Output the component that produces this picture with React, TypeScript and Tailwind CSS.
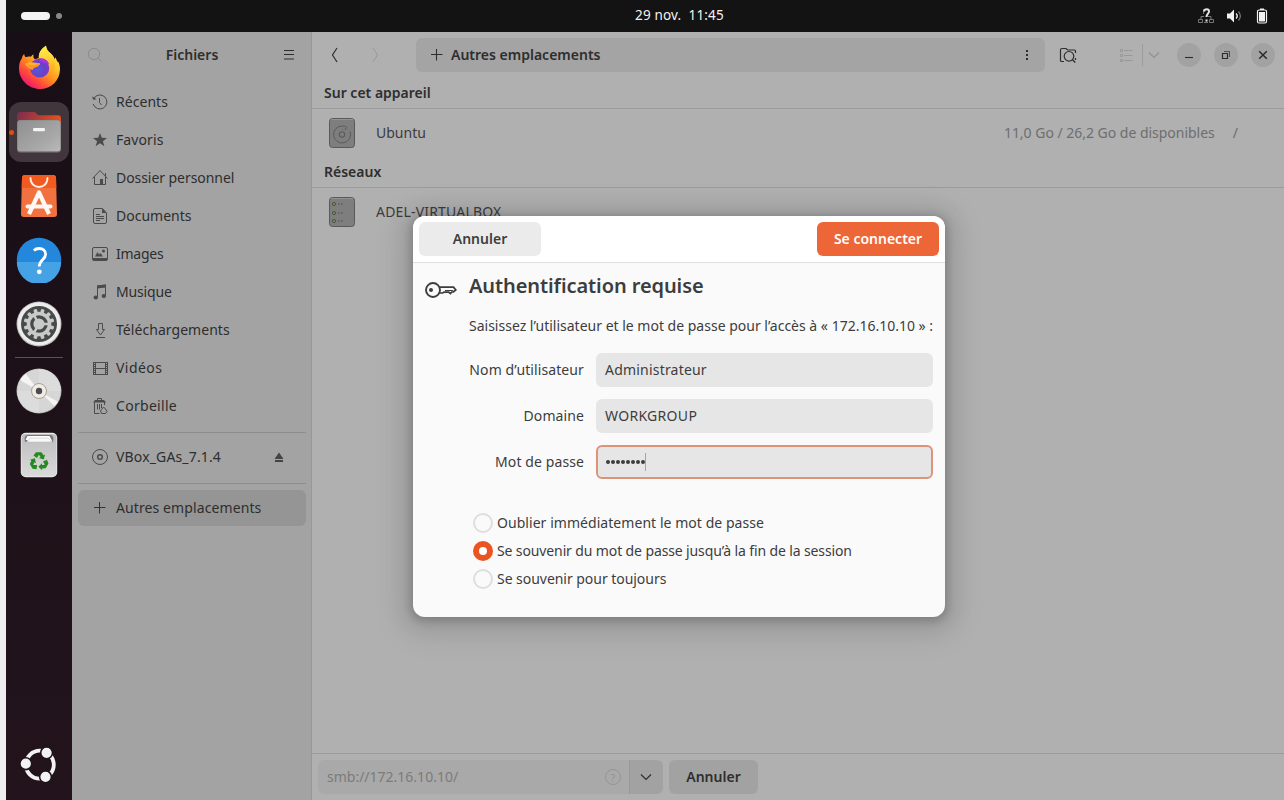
import type { ReactNode } from "react";

function Glyph({ children, size = 16, className = "" }: { children: ReactNode; size?: number; className?: string }) {
  return (
    <svg
      width={size}
      height={size}
      viewBox={`0 0 ${size} ${size}`}
      fill="none"
      stroke="currentColor"
      strokeWidth="1"
      className={`shrink-0 ${className}`}
    >
      {children}
    </svg>
  );
}

/* ---------- Dock icons ---------- */

function FirefoxIcon() {
  return (
    <svg width="44" height="46" viewBox="0 0 44 46">
      <defs>
        <linearGradient id="ffBody" x1="0.85" y1="0.1" x2="0.2" y2="0.95">
          <stop offset="0" stopColor="#fff14a" />
          <stop offset="0.3" stopColor="#ffc02a" />
          <stop offset="0.55" stopColor="#ff8a1f" />
          <stop offset="0.78" stopColor="#ff4440" />
          <stop offset="1" stopColor="#ee1273" />
        </linearGradient>
        <linearGradient id="ffTail" x1="0.5" y1="0" x2="0.6" y2="1">
          <stop offset="0" stopColor="#fff04d" />
          <stop offset="0.55" stopColor="#ffc92c" />
          <stop offset="1" stopColor="#ff8a1c" stopOpacity="0.2" />
        </linearGradient>
        <radialGradient id="ffGlobe" cx="0.4" cy="0.6" r="0.65">
          <stop offset="0" stopColor="#5a55d8" />
          <stop offset="0.6" stopColor="#6642c6" />
          <stop offset="1" stopColor="#9033d4" />
        </radialGradient>
      </defs>
      <path
        d="M1 23.5c0-5.300 1.400-8 3-10.500.2-1.200.8-2.500 2.200-4 .2 1.500.7 2.500 1.400 3.200 1.700-.9 4-1 5.400-.5.6-1.200 1.500-1.900 2.600-2.200-.6 1.800-.2 3.500 1.200 4.800l4-1.200c-.5-5 2.300-9.500 7.200-12.400.2 3.300 2 5.300 4.500 7.600 2.200 1.900 3.700 4 4.300 6.500l.3-2.600c1.300 1.700 2 3.500 2.100 5.400l.6-1.500c1.600 2.700 2.300 5.600 2.200 8.300C41.700 35.600 33.200 44 22 44S1 35 1 23.500Z"
        fill="url(#ffBody)"
      />
      <path d="M21 13.500C20.300 8.200 23 3.800 28 .7c.2 3.300 2 5.300 4.500 7.600 4.500 4 5.500 9.300 4.500 14-.8 4-3 7-6 8.500 2.300-5 1.800-10.500-2.200-14-2.400-2-4.900-2.600-7.800-3.300Z" fill="url(#ffTail)" />
      <circle cx="21.700" cy="23" r="9.600" fill="url(#ffGlobe)" />
      <path d="M21 13.500c4-.7 8.600 1.200 10.300 5.800-1.800-1.200-3.600-1.600-5.300-1.200l-4-2Z" fill="#a436dc" />
      <path d="M7 18.800c3.500-2 7.500-1.900 10.500-1 2 .6 3.500.4 4.700.7-.5 1.700-2 2.800-4.200 3.500-2.200.8-3.500 1.400-3.500 3.200-2.600-1.400-5.500-3.400-7.500-6.400Z" fill="#ffb12e" />
      <path d="M14.500 25c.5-1.700 1.600-2.300 3.500-3 2.100-.7 3.600-1.700 4.200-3.500l-2-.3c-1.500 1.700-3.500 2-5.500 2-2 0-4-.6-5.700-1.300 1.400 2.700 3.300 4.700 5.500 6.100Z" fill="#ff9126" />
    </svg>
  );
}

function FilesIcon() {
  return (
    <svg width="48" height="48" viewBox="0 0 48 48">
      <defs>
        <linearGradient id="folderBack" x1="0" y1="0" x2="1" y2="0.2">
          <stop offset="0" stopColor="#7a2b52" />
          <stop offset="1" stopColor="#e2501d" />
        </linearGradient>
        <linearGradient id="folderFront" x1="0" y1="0" x2="1" y2="1">
          <stop offset="0" stopColor="#8f8f8f" />
          <stop offset="0.7" stopColor="#a9a9a9" />
          <stop offset="1" stopColor="#bababa" />
        </linearGradient>
      </defs>
      <path d="M2 7a3 3 0 0 1 3-3h14c2 0 3 3.200 5 3.200h19a3 3 0 0 1 3 3V20H2Z" fill="url(#folderBack)" />
      <rect x="2" y="12" width="44" height="32.500" rx="3.500" fill="#777" />
      <rect x="2.500" y="12.300" width="43" height="31" rx="3" fill="url(#folderFront)" />
      <rect x="18" y="20" width="12" height="3.200" rx="1.300" fill="#f4f4f4" />
    </svg>
  );
}

function SoftwareIcon() {
  return (
    <svg width="38" height="44" viewBox="0 0 38 44">
      <path d="M5 1h28a3 3 0 0 1 3 2.800l1 36a3 3 0 0 1-3 3.200H4a3 3 0 0 1-3-3.200l1-36A3 3 0 0 1 5 1Z" fill="#f1713f" />
      <path d="M5 1h28a3 3 0 0 1 3 2.800L36.300 14H1.700L2 3.800A3 3 0 0 1 5 1Z" fill="#f25a1f" />
      <path d="M10.500 4c0 12 17 12 17 0" fill="none" stroke="#fff0e8" strokeWidth="1.800" strokeLinecap="round" />
      <path d="m9 40 10-21.500L29 40" fill="none" stroke="#fff7f3" strokeWidth="4.200" strokeLinejoin="round" />
      <path d="M7.500 32.500h23" stroke="#fff7f3" strokeWidth="4" strokeLinecap="round" />
    </svg>
  );
}

function HelpIcon() {
  return (
    <svg width="46" height="46" viewBox="0 0 46 46">
      <circle cx="23" cy="23" r="22.200" fill="#2388dc" />
      <path d="M.8 25h44.400a22.200 22.200 0 0 1-44.400 0Z" fill="#45a3e5" />
      <path d="M17.800 13.500c1.500-1.400 3.200-2 5.300-2 4 0 6.500 2.300 6.500 5.700 0 5.600-6.300 5.700-6.300 12.300" fill="none" stroke="#fff" strokeWidth="2.800" />
      <circle cx="23.300" cy="34.800" r="2.400" fill="#fff" />
    </svg>
  );
}

const teeth = [0, 30, 60, 90, 120, 150, 180, 210, 240, 270, 300, 330];

function SettingsIcon() {
  return (
    <svg width="46" height="46" viewBox="0 0 46 46">
      <circle cx="23" cy="23" r="22.500" fill="#b9b9b9" />
      <circle cx="23" cy="22.800" r="21.500" fill="#ececec" />
      <circle cx="23" cy="23" r="18" fill="#484a4a" />
      {teeth.map((a) => (
        <rect key={a} x="21.200" y="7.700" width="3.600" height="5" rx="1" fill="#c9c9c9" transform={`rotate(${a + 15} 23 23)`} />
      ))}
      <circle cx="23" cy="23" r="12.300" fill="#c9c9c9" />
      <circle cx="23" cy="23" r="7.200" fill="none" stroke="#484a4a" strokeWidth="3.200" />
      <path d="M23 23h10M23 23l-5-8.700M23 23l-5 8.700" stroke="#c9c9c9" strokeWidth="2.500" />
      <circle cx="23" cy="23" r="4.700" fill="#c9c9c9" />
    </svg>
  );
}

function DiscIcon() {
  return (
    <svg width="46" height="46" viewBox="0 0 46 46">
      <circle cx="23" cy="23" r="22.500" fill="#aaa" />
      <circle cx="23" cy="22.900" r="21.800" fill="#d6d6d6" />
      <path d="M23 23 23 1.100A21.800 21.800 0 0 1 44.800 23ZM23 23v21.800A21.800 21.800 0 0 1 1.200 23Z" fill="#dcdcdc" />
      <path d="M23 23 4.200 12.200a21.800 21.800 0 0 1 5.500-6.500ZM23 23l18.800 10.800a21.800 21.800 0 0 1-3.300 4.300Z" fill="#f6f4f2" />
      <circle cx="23" cy="23" r="7.500" fill="#eeece8" stroke="#aaa190" strokeWidth="1" />
      <circle cx="23" cy="23" r="3.200" fill="#4b4b4b" />
    </svg>
  );
}

function TrashIcon() {
  return (
    <svg width="38" height="46" viewBox="0 0 38 46">
      <defs>
        <linearGradient id="bin" x1="0" y1="0" x2="0" y2="1">
          <stop offset="0" stopColor="#bdbdbd" />
          <stop offset="1" stopColor="#dadada" />
        </linearGradient>
      </defs>
      <rect x=".8" y=".8" width="36.400" height="44.400" rx="5" fill="#ececec" />
      <rect x="1.500" y="2" width="35" height="42.200" rx="4" fill="url(#bin)" />
      <path d="M5 10c-1-4 0-7 3-7h22c3 0 4 3 3 7H30L28 6.500 9 9Z" fill="#777" />
      <path d="M7.500 4h22l3 5.500-4-.6-3-3-17 3-3-1.500Z" fill="#fff" />
      <path d="M7 10 10 6h18l4 4Z" fill="#f8f8f8" stroke="#bbb" strokeWidth=".5" />
      {[0, 120, 240].map((a) => (
        <g key={a} transform={`rotate(${a} 19 29.500)`}>
          <path d="M13.500 23.500 16 20.300h5.500l2 3 1.500-.8-1.200 5-4.800-1.500 1.600-.9-1.700-2.300-2 3.300Z" fill="#268b1f" />
        </g>
      ))}
    </svg>
  );
}

function LauncherIcon() {
  return (
    <svg width="40" height="40" viewBox="0 0 40 40">
      <circle cx="20.800" cy="19.700" r="14" fill="none" stroke="#f2f2f2" strokeWidth="3.800" />
      <g fill="#f2f2f2" stroke="#20131a" strokeWidth="1.600">
        <circle cx="6.800" cy="18.700" r="5.900" />
        <circle cx="27.600" cy="7.800" r="5.900" />
        <circle cx="26.500" cy="31.800" r="5.900" />
      </g>
    </svg>
  );
}

function Dock() {
  return (
    <nav className="flex w-[66px] shrink-0 flex-col items-center bg-linear-to-b from-[#180e15] to-[#23141c] pt-1">
      <div className="flex h-16 items-center justify-center pl-0.5"><FirefoxIcon /></div>
      <div className="flex h-16 w-full items-center justify-center">
        <div className="relative flex size-[60px] items-center justify-center rounded-xl bg-[#42363d]">
          <span className="absolute top-[27.500px] left-0 size-[5px] rounded-full bg-[#df4b19]" />
          <FilesIcon />
        </div>
      </div>
      <div className="flex h-16 items-center justify-center"><SoftwareIcon /></div>
      <div className="flex h-16 items-center justify-center pb-px"><HelpIcon /></div>
      <div className="flex h-16 items-center justify-center"><SettingsIcon /></div>
      <div className="my-px h-px w-12 bg-[#5a5257]" />
      <div className="flex h-16 items-center justify-center"><DiscIcon /></div>
      <div className="flex h-16 items-center justify-center"><TrashIcon /></div>
      <div className="mt-auto mb-[15px] flex size-10 items-center justify-center"><LauncherIcon /></div>
    </nav>
  );
}

/* ---------- Sidebar ---------- */

const places: { label: string; tracking: string; icon: ReactNode }[] = [
  {
    label: "Récents",
    tracking: "tracking-[0.05px]",
    icon: (
      <Glyph>
        <path d="M1.800 4.500A7 7 0 1 1 1.200 10" />
        <path d="M.3 2.300 1 5.800l3.500-.6Z" fill="currentColor" stroke="none" />
        <path d="M7.500 4v4.500l2 2.500" />
      </Glyph>
    ),
  },
  {
    label: "Favoris",
    tracking: "tracking-[0.1px]",
    icon: (
      <Glyph>
        <path d="m8 1 1.800 4.800 5.200.2-4.100 3.200 1.500 5L8 11.300l-4.400 2.900 1.500-5L1 6l5.200-.2Z" fill="currentColor" stroke="none" />
      </Glyph>
    ),
  },
  {
    label: "Dossier personnel",
    tracking: "tracking-[-0.06px]",
    icon: (
      <Glyph>
        <path d="m.5 8.500 7.500-8 7.500 8M2.500 7v7.500h11V7M13.500 3v3" />
        <path d="M8 9h3v5.500H8Z" fill="currentColor" stroke="none" />
      </Glyph>
    ),
  },
  {
    label: "Documents",
    tracking: "",
    icon: (
      <Glyph>
        <path d="M10.500.5H3a1.500 1.500 0 0 0-1.500 1.500v12A1.500 1.500 0 0 0 3 15.500h10a1.500 1.500 0 0 0 1.500-1.500V5ZM4 6.500h4M4 8.500h8M4 10.500h8M4 12.500h4" />
        <path d="M10 .5 14.500 5H10Z" fill="currentColor" stroke="none" />
      </Glyph>
    ),
  },
  {
    label: "Images",
    tracking: "tracking-[-0.25px]",
    icon: (
      <Glyph>
        <rect x=".5" y="1.500" width="15" height="13" rx="1.500" />
        <path d="M1 12h14v2.500H1ZM3 10.500l2.500-4.500 1.500 2.500L8.500 7l2.500 3.500Z" fill="currentColor" stroke="none" />
        <circle cx="11.500" cy="5" r="1.500" fill="currentColor" stroke="none" />
      </Glyph>
    ),
  },
  {
    label: "Musique",
    tracking: "tracking-[-0.15px]",
    icon: (
      <Glyph>
        <path d="M5.500 13V2l8-1v10.500" />
        <path d="M5 1.500 14 .500V3.500L5 4.500Z" fill="currentColor" stroke="none" />
        <ellipse cx="3.800" cy="13.500" rx="2.200" ry="1.900" fill="currentColor" stroke="none" />
        <ellipse cx="11.800" cy="12" rx="2.200" ry="1.900" fill="currentColor" stroke="none" />
      </Glyph>
    ),
  },
  {
    label: "Téléchargements",
    tracking: "tracking-[0.05px]",
    icon: (
      <Glyph>
        <path d="M6.500 1.500h4v6h2L8.500 13l-4-5.500h2ZM4 15.500h9" />
      </Glyph>
    ),
  },
  {
    label: "Vidéos",
    tracking: "tracking-[0.45px]",
    icon: (
      <Glyph>
        <path d="M1.500 2v13M15.500 2v13M3.500 2v13M13.500 2v13M1 2.500h14.500M3.500 8.500h10M1 14.500h14.500M1 4.500h2M1 6.500h2M1 8.500h2M1 10.500h2M1 12.500h2M14 4.500h2M14 6.500h2M14 8.500h2M14 10.500h2M14 12.500h2" />
      </Glyph>
    ),
  },
  {
    label: "Corbeille",
    tracking: "tracking-[0.3px]",
    icon: (
      <Glyph>
        <path d="M5.500 2.500V.500h4v2M2.500 4.500v11h5M12.500 4v3M5.500 6v5.500M7.500 6v5.500M9.500 6v4" />
        <path d="M1 4.500 3 2h9l2 2.500Z" fill="currentColor" stroke="none" />
        <path d="m9.500 11.500 2-2.500 2 2 1.500 2.500-1.500 2h-4L8.500 13Z" />
      </Glyph>
    ),
  },
];

function Sidebar() {
  return (
    <aside className="flex w-60 shrink-0 flex-col border-r border-[#989898] bg-[#a3a3a3] text-[#2e2e2e]">
      <header className="flex h-[46px] items-center justify-between pr-3.5 pl-[15px]">
        <Glyph className="text-[#8b8b8b]">
          <circle cx="7" cy="7" r="5.700" />
          <path d="m11 11 3.500 3.500" />
        </Glyph>
        <h1 className="pb-0.5 text-[14px] font-semibold">Fichiers</h1>
        <Glyph>
          <path d="M3 3.500h10M3 7.500h10M3 12h10" strokeWidth="1.200" />
        </Glyph>
      </header>
      <ul className="flex flex-col gap-0.5 pt-1.5 pr-[5px] pl-1.5">
        {places.map((p) => (
          <li key={p.label} className="flex h-9 items-center gap-2 px-3.5 text-[14px]">
            <span className="text-[#4b4b4b]">{p.icon}</span>
            <span className={`pb-0.5 ${p.tracking}`}>{p.label}</span>
          </li>
        ))}
      </ul>
      <div className="mt-2 mr-[5px] ml-1.5 h-px bg-[#8d8d8d]" />
      <div className="mt-1.5 mr-[5px] ml-1.5 flex h-9 items-center gap-2 px-3.5 text-[14px]">
        <Glyph className="text-[#4b4b4b]">
          <circle cx="8" cy="8" r="7.500" />
          <circle cx="8" cy="8" r="2.300" strokeWidth="1.500" />
        </Glyph>
        <span className="flex-1 pb-0.5 tracking-[0.15px]">VBox_GAs_7.1.4</span>
        <Glyph className="mr-[5px] text-[#444]">
          <path d="m8 3.500 4.500 6.500h-9ZM4 11h8v2H4Z" fill="currentColor" stroke="none" />
        </Glyph>
      </div>
      <div className="mt-2 mr-[5px] ml-1.5 h-px bg-[#8d8d8d]" />
      <div className="mt-1.5 mr-[5px] ml-1.5 flex h-9 items-center gap-2 rounded-md bg-[#959595] px-3.5 text-[14px]">
        <Glyph className="text-[#333]">
          <path d="M2 7.500h11.500M7.500 2v11.500" />
        </Glyph>
        <span className="pb-0.5 tracking-[0.1px]">Autres emplacements</span>
      </div>
    </aside>
  );
}

/* ---------- Main pane ---------- */

function WindowButton({ children }: { children: ReactNode }) {
  return <span className="flex size-6 items-center justify-center rounded-full bg-[#a2a2a2] text-[#2b2b2b]">{children}</span>;
}

function Toolbar() {
  return (
    <header className="flex h-[46px] shrink-0 items-center pr-[9px] pl-[14px]">
      <Glyph>
        <path d="M11 1 6.500 8l4.500 7" strokeWidth="1.200" />
      </Glyph>
      <Glyph className="ml-6 text-[#989898]">
        <path d="M7 1l4.500 7L7 15" />
      </Glyph>
      <div className="ml-[34px] flex h-[34px] w-[629px] items-center rounded-md bg-[#a4a4a4] pr-2.5 pl-[13px]">
        <Glyph>
          <path d="M2 7.500h11.500M7.500 2v11.500" strokeWidth="1.100" />
        </Glyph>
        <span className="ml-1.5 flex-1 pb-0.5 text-[14px] font-semibold">Autres emplacements</span>
        <Glyph>
          <path d="M7 3h2v2H7ZM7 7h2v2H7ZM7 11h2v2H7Z" fill="currentColor" stroke="none" />
        </Glyph>
      </div>
      <Glyph size={18} className="ml-[14px]">
        <path d="M5 15.500H2.500A1 1 0 0 1 1.500 14.500V4A1.500 1.500 0 0 1 3 2.500h4L8.500 4h7a1 1 0 0 1 1 1v2M16.500 12v2" strokeWidth="1.200" />
        <circle cx="10" cy="10.300" r="4.800" strokeWidth="1.200" />
        <path d="m13.300 13.500 3 3" strokeWidth="1.300" />
      </Glyph>
      <Glyph className="ml-[43px] text-[#989898]">
        <path d="M.5 2.500h2v2h-2ZM.500 7.500h2v2h-2ZM.500 12.500h2v2h-2ZM4 3.500h8.500M4 8.500h8.500M4 13.500h8.500" />
      </Glyph>
      <div className="ml-1.5 h-[22px] w-px bg-[#9d9d9d]" />
      <Glyph className="ml-[3px] text-[#929292]">
        <path d="m3 5.500 5 5 5-5" strokeWidth="1.200" />
      </Glyph>
      <div className="ml-auto flex gap-[13px]">
        <WindowButton>
          <Glyph><path d="M4 10.500h8" strokeWidth="1.100" /></Glyph>
        </WindowButton>
        <WindowButton>
          <Glyph>
            <path d="M4.500 6.500h5v5h-5Z" strokeWidth="1.200" />
            <path d="M6 4.500h5.500V10" strokeWidth="1" opacity="0.700" />
          </Glyph>
        </WindowButton>
        <WindowButton>
          <Glyph><path d="m4.200 4.200 7.600 7.600M11.800 4.200l-7.600 7.600" strokeWidth="1.500" /></Glyph>
        </WindowButton>
      </div>
    </header>
  );
}

function DriveIcon() {
  return (
    <svg width="28" height="32" viewBox="0 0 28 32" className="shrink-0">
      <rect x="1.500" y="1.500" width="25" height="29" rx="3" fill="#7e7e7e" stroke="#595959" />
      <path d="M3 2.500h22" stroke="#929292" />
      <path d="M22 14.500a8.500 8.500 0 1 1-7.500-5.500c2.500 0 4 .8 4.500 1.500-.5 1-1.500 1.800-2.500 2M14 12.500h.5" fill="none" stroke="#5c5c5c" strokeWidth="1" />
      <circle cx="14" cy="17.500" r="2.700" fill="none" stroke="#5c5c5c" strokeWidth="1.100" />
    </svg>
  );
}

function ServerIcon() {
  return (
    <svg width="28" height="32" viewBox="0 0 28 32" className="shrink-0">
      <rect x="1.500" y="1.500" width="25" height="29" rx="3" fill="#7e7e7e" stroke="#595959" />
      <path d="M3 2.500h22" stroke="#929292" />
      {[8, 17, 25].map((y) => (
        <g key={y}>
          <circle cx="6" cy={y} r="1.600" fill="#6e9440" stroke="#525252" />
          <path d={`M10 ${y}h1.500M13 ${y}h1.500`} stroke="#4b4b4b" strokeWidth="1.200" />
        </g>
      ))}
    </svg>
  );
}

function MainPane() {
  return (
    <main className="flex flex-1 flex-col bg-[#b0b0b0] text-[#2e2e2e]">
      <Toolbar />
      <h2 className="flex h-[31px] items-center border-b border-[#9b9b9b] pb-0.5 pl-3 text-[14px] font-semibold">Sur cet appareil</h2>
      <div className="flex h-12 items-center pl-4 text-[14px]">
        <DriveIcon />
        <span className="ml-5 flex-1 pb-0.5 text-[#3c3c3c]">Ubuntu</span>
        <span className="pb-0.5 tracking-[-0.02px] text-[#6e6e6e]">11,0 Go / 26,2 Go de disponibles</span>
        <span className="mr-[46px] ml-[18px] pb-0.5 text-[#6e6e6e]">/</span>
      </div>
      <h2 className="flex h-[31px] items-center border-b border-[#9b9b9b] pb-0.5 pl-3 text-[14px] font-semibold">Réseaux</h2>
      <div className="flex h-12 items-center pl-4 text-[14px]">
        <ServerIcon />
        <span className="ml-5 pb-0.5 tracking-[0.18px] text-[#3c3c3c]">ADEL-VIRTUALBOX</span>
      </div>
      <footer className="mt-auto flex h-[47px] items-center gap-1.5 border-t border-[#9b9b9b] px-1.5 text-[14px]">
        <div className="flex h-[34px] w-[345px] overflow-hidden rounded-md">
          <div className="flex flex-1 items-center justify-between bg-[#a9a9a9] pr-2 pl-[9px] text-[#7b7b7b]">
            <span className="pb-0.5">smb://172.16.10.10/</span>
            <span className="flex size-4 items-center justify-center rounded-full border border-[#959595] text-[11px] leading-none text-[#959595]">?</span>
          </div>
          <div className="flex w-[34px] items-center justify-center border-l border-[#999] bg-[#a2a2a2]">
            <Glyph className="mr-px"><path d="m3 5.500 5 5 5-5" strokeWidth="1.200" /></Glyph>
          </div>
        </div>
        <button className="h-[34px] w-[89px] rounded-md bg-[#a2a2a2] pb-0.5 font-semibold">Annuler</button>
      </footer>
    </main>
  );
}

/* ---------- Authentication dialog ---------- */

function Field({ label, children, focused = false }: { label: string; children: ReactNode; focused?: boolean }) {
  return (
    <div className="flex items-center gap-3">
      <label className="w-[115px] shrink-0 pb-0.5 text-right tracking-[0.1px] whitespace-nowrap">{label}</label>
      <div
        className={`flex h-[34px] flex-1 items-center rounded-md bg-[#e6e6e6] ${focused ? "border-2 border-[#dd937a] px-[7px]" : "px-[9px]"}`}
      >
        {children}
      </div>
    </div>
  );
}

function Choice({ label, checked = false, tracking = "" }: { label: string; checked?: boolean; tracking?: string }) {
  return (
    <div className="flex h-7 items-center gap-1">
      {checked ? (
        <span className="flex size-5 items-center justify-center rounded-full bg-[#e95420]">
          <span className="size-2 rounded-full bg-white" />
        </span>
      ) : (
        <span className="size-5 rounded-full border-2 border-[#dedede]" />
      )}
      <span className={`pb-0.5 whitespace-nowrap ${tracking}`}>{label}</span>
    </div>
  );
}

function AuthDialog() {
  return (
    <section className="absolute top-[216px] left-[413px] h-[401px] w-[532px] overflow-hidden rounded-xl bg-[#fafafa] text-[14px] text-[#3d3d3d] shadow-[0_2px_8px_2px_rgba(0,0,0,0.18),0_3px_20px_10px_rgba(0,0,0,0.09),0_6px_32px_16px_rgba(0,0,0,0.05)]">
      <header className="flex h-[47px] items-center justify-between border-b border-[#e0e0e0] bg-white px-1.5">
        <button className="h-[34px] w-[122px] rounded-md bg-[#ebebeb] pb-0.5 font-semibold">Annuler</button>
        <button className="h-[34px] w-[122px] rounded-md bg-[#ed6637] pb-0.5 font-semibold text-white">Se connecter</button>
      </header>
      <div className="flex gap-3 pr-3 pl-3">
        <svg width="32" height="32" viewBox="0 0 32 32" fill="none" stroke="#3d3d3d" strokeWidth="1.900" className="mt-[11px] shrink-0">
          <circle cx="8" cy="16" r="7" />
          <circle cx="6" cy="16" r="2" fill="#3d3d3d" stroke="none" />
          <path d="M14.500 13.200H28.500L30.800 16l-2.300 2h-1.800l-1.200 1.500-1.800-1.300H19l-1.500.8h-3" strokeWidth="1.700" />
          <path d="M20 16.500h7l1.500.5" strokeWidth="1" />
        </svg>
        <div className="flex-1">
          <h2 className="mt-2 h-[30px] text-[20px] leading-[30px] font-semibold tracking-[-0.09px] whitespace-nowrap">Authentification requise</h2>
          <p className="mt-[15px] leading-5 whitespace-nowrap">Saisissez l’utilisateur et le mot de passe pour l’accès à « 172.16.10.10 » :</p>
          <div className="mt-[17px] flex flex-col gap-3">
            <Field label="Nom d’utilisateur">
              <span className="pb-0.5 tracking-[0.2px]">Administrateur</span>
            </Field>
            <Field label="Domaine">
              <span className="pb-0.5 tracking-[0.3px]">WORKGROUP</span>
            </Field>
            <Field label="Mot de passe" focused>
              <span className="flex gap-px pl-px">
                {[0, 1, 2, 3, 4, 5, 6, 7].map((i) => (
                  <span key={i} className="size-1 rounded-full bg-[#3d3d3d]" />
                ))}
              </span>
              <span className="h-[18px] w-px bg-[#a5a5a5]" />
            </Field>
          </div>
          <div className="mt-[30px] pl-1">
            <Choice label="Oublier immédiatement le mot de passe" tracking="tracking-[0.05px]" />
            <Choice label="Se souvenir du mot de passe jusqu’à la fin de la session" checked tracking="tracking-[-0.12px]" />
            <Choice label="Se souvenir pour toujours" tracking="tracking-[-0.04px]" />
          </div>
        </div>
      </div>
    </section>
  );
}

function TopBar() {
  return (
    <header className="grid h-8 shrink-0 grid-cols-3 items-center bg-[#131313] text-[#f2f2f2]">
      <div className="flex items-center gap-[6px] pl-[15px]">
        <span className="h-2 w-[29px] rounded-full bg-[#f4f4f4]" />
        <span className="size-[6px] rounded-full bg-[#888]" />
      </div>
      <div className="pb-0.5 pl-[69px] text-center text-[13.500px] tracking-[0.15px] whitespace-pre">29 nov.  11:45</div>
      <div className="flex items-center justify-end gap-3 pr-[14px]">
        <Glyph className="text-[#777]">
          <path d="M.5 11.500h4v3h-4ZM11.500 11.500h4v3h-4ZM6 14.500h4M3 11V8.500h3M13 11V8.500h-3M5.500 6V1.500h2" />
          <path d="M6 3.500C6.500.5 11 .5 11 3.500c0 2-2.500 2.500-2.500 5.500M8.500 11.500v2" stroke="#e4e4e4" strokeWidth="2" />
        </Glyph>
        <Glyph>
          <path d="M1 5.500h3L8 1.500v13l-4-4H1Z" fill="currentColor" stroke="none" />
          <path d="M10 5.500c1.500 1.500 1.500 3.500 0 5" strokeWidth="1.300" />
          <path d="M12.500 3.500c2.500 3 2.500 6 0 9" stroke="#777" strokeWidth="1.200" />
        </Glyph>
        <Glyph>
          <path d="M6 .500h4v1.500H6Z" fill="currentColor" stroke="none" />
          <rect x="3.500" y="2" width="9" height="13" rx="1.500" strokeWidth="1.200" />
          <path d="M5 4h6v9.500H5Z" fill="currentColor" stroke="none" />
        </Glyph>
      </div>
    </header>
  );
}

export default function App() {
  return (
    <div className="relative flex h-[800px] w-[1284px] overflow-hidden bg-[#efefef] pl-1.5 font-['Noto_Sans',sans-serif]">
      <div className="flex flex-1 flex-col">
        <TopBar />
        <div className="flex min-h-0 flex-1">
          <Dock />
          <Sidebar />
          <MainPane />
        </div>
      </div>
      <AuthDialog />
    </div>
  );
}
